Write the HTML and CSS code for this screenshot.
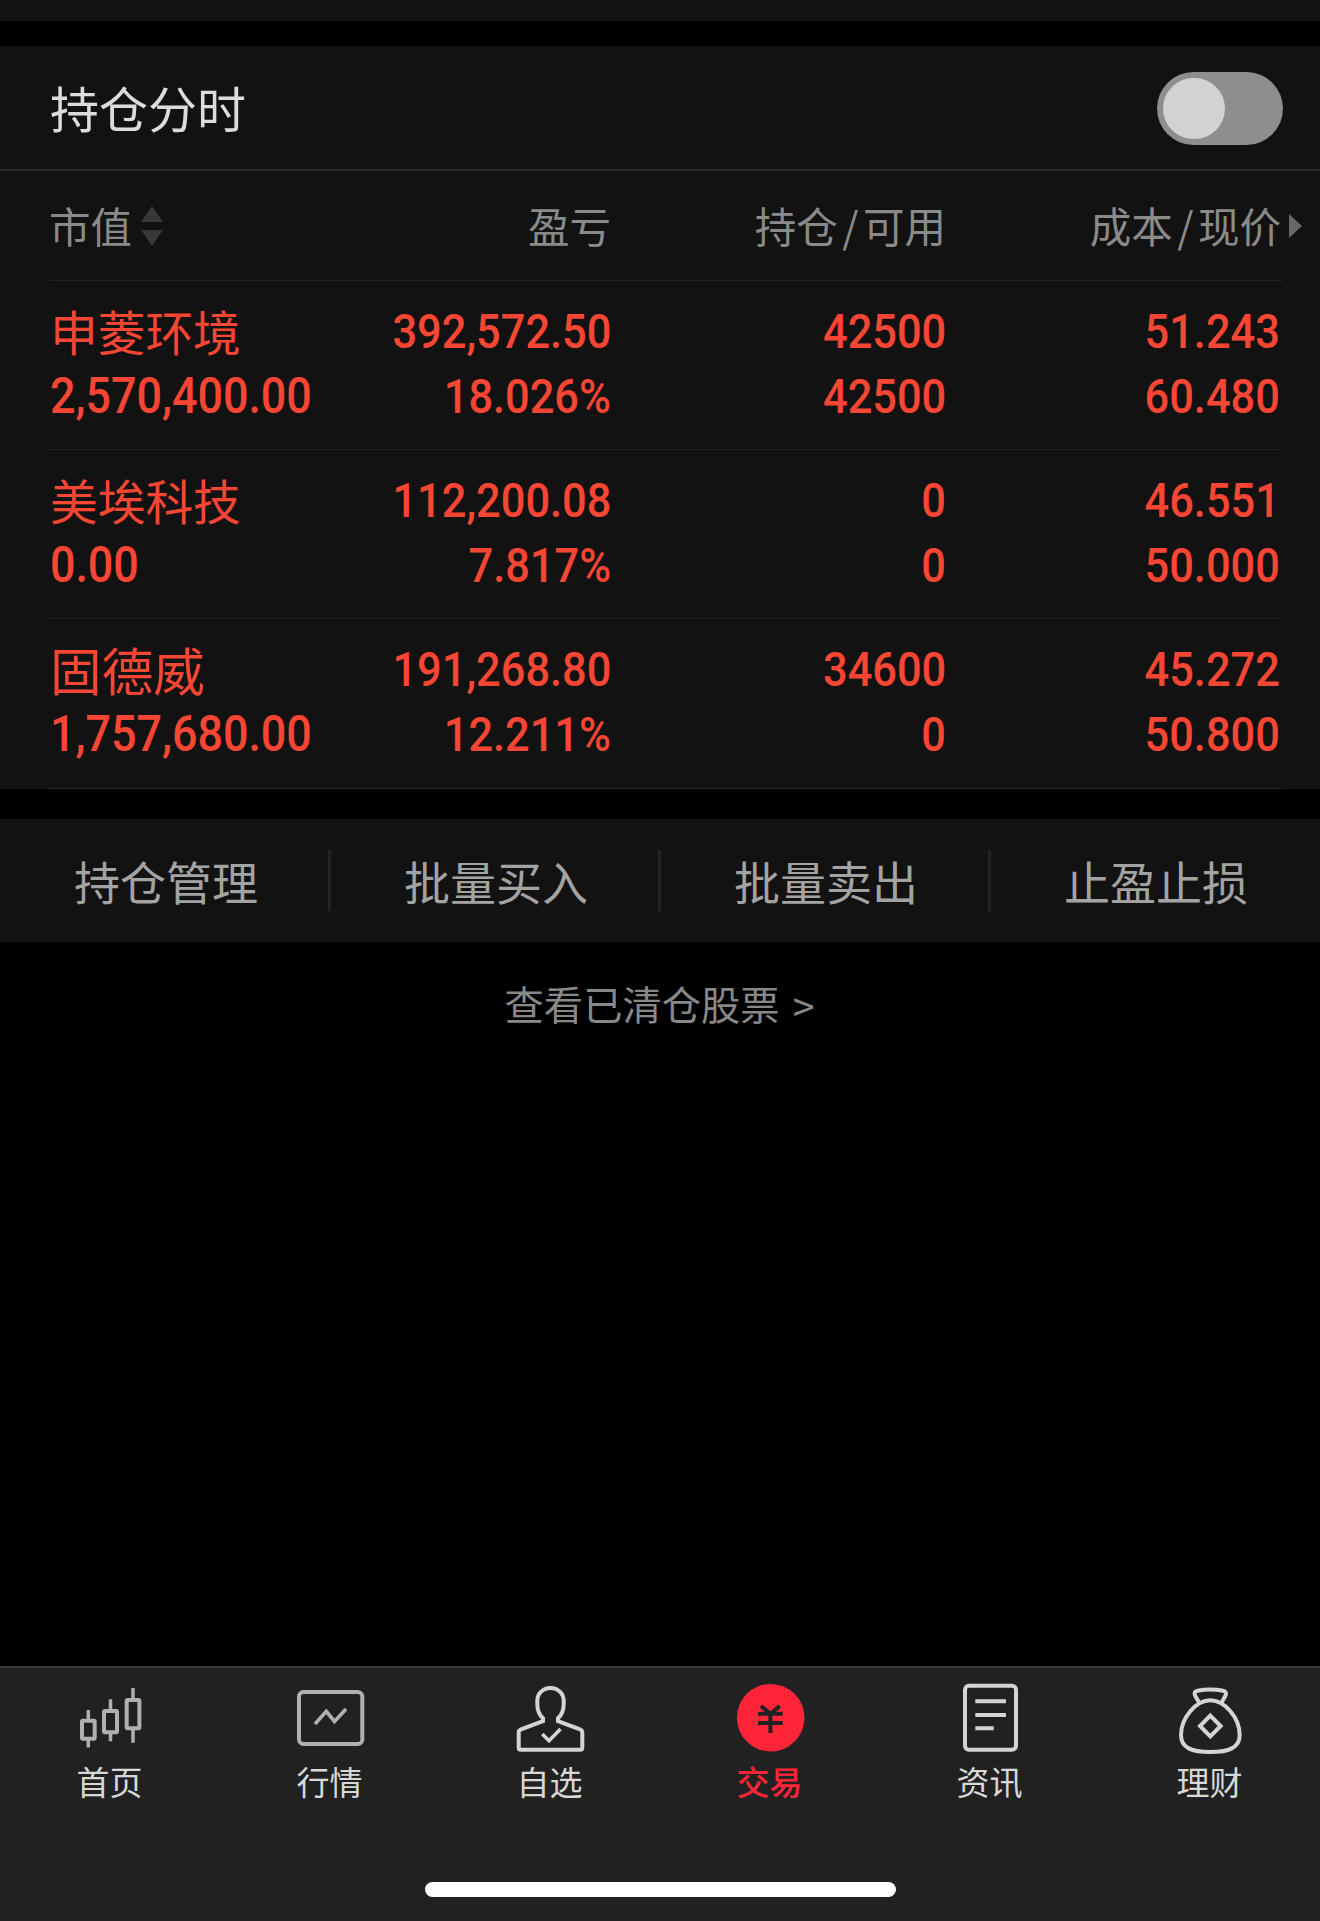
FILE: index.html
```html
<!DOCTYPE html>
<html lang="zh-CN">
<head>
<meta charset="utf-8">
<title>持仓</title>
<link rel="stylesheet" href="styles.css">
</head>
<body>
<main class="screen">
  <div class="strip"></div>
  <section class="holdings">
    <header class="title-bar">
      <h1 class="title">持仓分时</h1>
      <div class="toggle"><div class="knob"></div></div>
    </header>
    <div class="row head">
      <div class="col first"><span class="text">市值</span><svg class="sort" width="22" height="40" viewBox="0 0 22 40"><path d="M11 0L22 16H0ZM0 24H22L11 40Z"/></svg></div>
      <div class="col"><span class="text">盈亏</span></div>
      <div class="col"><span class="text">持仓<span class="slash">/</span>可用</span></div>
      <div class="col last"><span class="text">成本<span class="slash">/</span>现价</span><svg class="more" width="13" height="24" viewBox="0 0 13 24"><path d="M0 0L13 12L0 24Z"/></svg></div>
    </div>
    <div class="row">
      <div class="col first"><span class="name">申菱环境</span><span class="num">2,570,400.00</span></div>
      <div class="col"><span class="num">392,572.50</span><span class="num">18.026%</span></div>
      <div class="col"><span class="num">42500</span><span class="num">42500</span></div>
      <div class="col price"><span class="num">51.243</span><span class="num">60.480</span></div>
    </div>
    <div class="row">
      <div class="col first"><span class="name">美埃科技</span><span class="num">0.00</span></div>
      <div class="col"><span class="num">112,200.08</span><span class="num">7.817%</span></div>
      <div class="col"><span class="num">0</span><span class="num">0</span></div>
      <div class="col price"><span class="num">46.551</span><span class="num">50.000</span></div>
    </div>
    <div class="row tail">
      <div class="col first"><span class="name large">固德威</span><span class="num">1,757,680.00</span></div>
      <div class="col"><span class="num">191,268.80</span><span class="num">12.211%</span></div>
      <div class="col"><span class="num">34600</span><span class="num">0</span></div>
      <div class="col price"><span class="num">45.272</span><span class="num">50.800</span></div>
    </div>
  </section>
  <nav class="actions">
    <div class="action">持仓管理</div>
    <div class="action">批量买入</div>
    <div class="action">批量卖出</div>
    <div class="action">止盈止损</div>
  </nav>
  <div class="cleared">查看已清仓股票<span class="chevron">&gt;</span></div>
  <footer class="tabbar">
    <div class="tabs">
      <div class="tab">
        <svg class="icon dim" viewBox="0 0 80 76"><g stroke-width="4"><rect x="12" y="40.7" width="12.7" height="18" rx="1"/><rect x="34" y="31" width="13" height="21.3" rx="1"/><rect x="56.7" y="20" width="12.7" height="28.3" rx="1"/></g><path stroke-width="3.5" d="M18.3 30V40M18.3 59V67.5M40.5 19.3V30M40.5 53V61.3M63 8V19M63 49V62.7"/></svg>
        <span class="label">首页</span>
      </div>
      <div class="tab">
        <svg class="icon dim" viewBox="0 0 80 76"><rect x="9" y="12" width="63.3" height="52" rx="4.5"/><path stroke-width="3.6" d="M25 44L36.3 31.3L44.5 41.5L56 29"/></svg>
        <span class="label">行情</span>
      </div>
      <div class="tab">
        <svg class="icon" viewBox="0 0 80 76"><path d="M33 41V38.2C29.3 35 27.3 30 27.3 24V21C27.3 13.5 33 8 40.5 8S53.7 13.5 53.7 21V24C53.7 30 51.7 35 48 38.2V41L70 49.3Q72.3 50.3 72.3 52.5V67.7Q72.3 69.7 70.3 69.7H10.7Q8.7 69.7 8.7 67.7V52.5Q8.7 50.3 11 49.3Z"/><path class="inner" d="M32.3 54L39 60.7L50.5 49"/></svg>
        <span class="label">自选</span>
      </div>
      <div class="tab active">
        <svg class="icon" viewBox="0 0 80 76"><circle class="coin" cx="40.7" cy="37.7" r="33.8"/><path class="yen" d="M31 26L40.4 33.7L49.8 26M28 33.7H52.7M28 43H52.7M40.4 33.7V53"/></svg>
        <span class="label">交易</span>
      </div>
      <div class="tab">
        <svg class="icon" viewBox="0 0 80 76"><rect x="15" y="5.7" width="51" height="64" rx="4"/><path d="M25.3 21.3H56M25.3 35H56M25.3 48.3H43.7"/></svg>
        <span class="label">资讯</span>
      </div>
      <div class="tab">
        <svg class="icon" viewBox="0 0 80 76"><path d="M40.3 20.3C26 20.3 11 38 11 55C11 68 22 72 40.3 72S69.7 68 69.7 55C69.7 38 54.7 20.3 40.3 20.3ZM29.3 23L25.2 15.8C23.8 13 24.8 11.3 27.5 10.8Q40.3 8 53 10.8C55.8 11.3 56.8 13 55.4 15.8L51.3 23M40.3 35.7L50.6 46L40.3 56.3L30 46Z"/></svg>
        <span class="label">理财</span>
      </div>
    </div>
    <div class="home-indicator"></div>
  </footer>
</main>
</body>
</html>
```
FILE: styles.css
```css
* { box-sizing: border-box; }

body {
  margin: 0;
  background: #000;
  font-family: "Noto Sans CJK SC", sans-serif;
}

.screen {
  width: 1320px;
  height: 1921px;
  display: flex;
  flex-direction: column;
}

.strip {
  height: 21px;
  margin-bottom: 25px;
  background: #121212;
}

.holdings { background: #121212; }

.title-bar {
  height: 125px;
  padding: 1px 37px 0 50px;
  display: flex;
  align-items: center;
  justify-content: space-between;
  border-bottom: 2px solid #262626;
}

.title {
  margin: 0;
  padding-bottom: 3px;
  font-size: 49px;
  line-height: 60px;
  font-weight: 400;
  color: #dcdcdc;
}

.toggle {
  width: 126px;
  height: 73px;
  padding: 6px;
  border-radius: 37px;
  background: #8e8e8e;
}

.knob {
  width: 62px;
  height: 61px;
  border-radius: 31px;
  background: #d2d2d2;
}

.row {
  height: 169px;
  margin: 0 37px 0 49px;
  padding-top: 18px;
  display: grid;
  grid-template-columns: 270px 292px 335px 1fr;
  border-bottom: 1px solid #232323;
  color: #f74633;
}

.row.tail { height: 170px; }

.row.head {
  height: 110px;
  padding-top: 0;
  align-items: center;
  font-size: 41.5px;
  line-height: 60px;
  color: #8a8a8a;
}

.col {
  display: flex;
  flex-direction: column;
  align-items: flex-end;
}

.col.first { align-items: flex-start; }

.col.price { padding-right: 3px; }

.head .col {
  flex-direction: row;
  align-items: center;
  justify-content: flex-end;
}

.head .col.first { justify-content: flex-start; }

.head .last { margin-right: -19px; }

.text { padding-bottom: 2px; }

.slash { padding: 0 4.5px; }

.sort {
  margin-left: 9px;
  fill: #383838;
}

.more {
  margin-left: 8px;
  fill: #686868;
}

.name {
  height: 65px;
  padding-left: 1px;
  font-size: 47.7px;
  line-height: 64px;
}

.name.large { font-size: 51.7px; }

.num {
  height: 65px;
  font-family: Roboto, sans-serif;
  font-size: 49px;
  font-weight: 500;
  line-height: 65px;
  transform: scaleX(0.885);
  transform-origin: right;
}

.first .num {
  padding-left: 1px;
  font-size: 50px;
  transform: scaleX(0.897);
  transform-origin: left;
}

.actions {
  height: 123px;
  margin-top: 30px;
  padding: 4px 0 0 1px;
  display: grid;
  grid-template-columns: repeat(4, 330px);
  align-items: center;
  background: #121212;
  border-bottom: 4px solid #151515;
}

.action {
  height: 61px;
  padding-left: 3px;
  font-size: 46px;
  line-height: 60px;
  text-align: center;
  color: #a3a3a3;
}

.action:not(:last-child) {
  border-right: 3px solid #232323;
}

.action:last-child { padding-right: 3px; }

.cleared {
  display: flex;
  justify-content: center;
  margin-top: 31px;
  padding-right: 1px;
  font-size: 39.3px;
  line-height: 60px;
  color: #888;
}

.chevron {
  margin-left: 13px;
  padding-top: 2px;
}

.tabbar {
  height: 255px;
  margin-top: auto;
  display: flex;
  flex-direction: column;
  align-items: center;
  justify-content: space-between;
  padding: 12px 0 24px;
  background: #212121;
  border-top: 2px solid #3a3a3a;
}

.tabs {
  width: 100%;
  display: grid;
  grid-template-columns: repeat(6, 1fr);
}

.tab {
  display: flex;
  flex-direction: column;
  align-items: center;
  color: #d8d8d8;
}

.tab.active { color: #ff2538; }

.tab.active .label { font-weight: 500; }

.icon {
  width: 80px;
  height: 76px;
  fill: none;
  stroke: #d4d4d4;
  stroke-width: 4;
}

.icon.dim { stroke: #b0b0b0; }

.icon .inner { stroke-width: 3.6; }

.icon .coin {
  fill: #ff2538;
  stroke: none;
}

.icon .yen { stroke: #212121; }

.label {
  padding-right: 1px;
  font-size: 33px;
  line-height: 51px;
}

.home-indicator {
  width: 471px;
  height: 15px;
  border-radius: 8px;
  background: #fff;
}
```
